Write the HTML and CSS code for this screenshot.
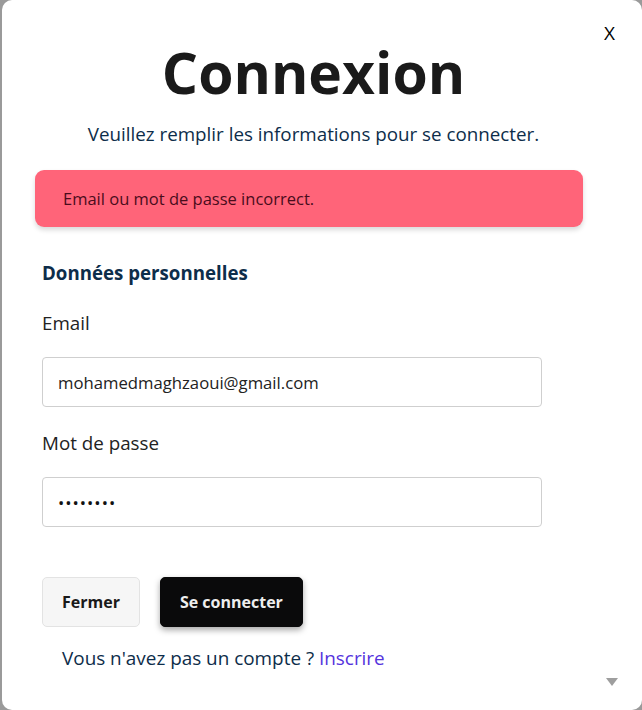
FILE: index.html
```html
<!DOCTYPE html>
<html lang="fr">
<head>
<meta charset="utf-8">
<title>Connexion</title>
<link rel="stylesheet" href="styles.css">
</head>
<body>
<div class="modal">
  <button class="close" type="button">X</button>
  <div class="content">
    <h1 class="title">Connexion</h1>
    <p class="subtitle">Veuillez remplir les informations pour se connecter.</p>
    <div class="alert">Email ou mot de passe incorrect.</div>
    <form class="form">
      <h2 class="section">Données personnelles</h2>
      <label class="label">Email</label>
      <div class="input">mohamedmaghzaoui@gmail.com</div>
      <label class="label">Mot de passe</label>
      <div class="input pass">••••••••</div>
      <div class="actions">
        <button type="button" class="btn btn-light">Fermer</button>
        <button type="button" class="btn btn-dark">Se connecter</button>
      </div>
      <p class="footer">Vous n'avez pas un compte ? <a href="#" class="link">Inscrire</a></p>
    </form>
  </div>
  <span class="scroll-arrow"></span>
</div>
</body>
</html>
```
FILE: styles.css
```css
* { box-sizing: border-box; }
html, body { margin: 0; height: 100%; }
body {
  background: #9a9a9a;
  font-family: "Open Sans", "Noto Sans", sans-serif;
  overflow: hidden;
}
.modal {
  position: relative;
  margin-left: 2px;
  height: 710px;
  background: #fff;
  border-radius: 10px;
  overflow: hidden;
}
.close {
  position: absolute;
  top: 20px;
  right: 27px;
  background: none;
  border: none;
  font-family: "Open Sans", sans-serif;
  font-size: 19px;
  color: #000;
  padding: 0;
}
.content {
  width: 623px;
  padding: 34px 0 0 33px;
}
.title {
  margin: 0;
  text-align: center;
  font-size: 57px;
  line-height: 76px;
  font-weight: 700;
  color: #1a1a1a;
  padding-right: 33px;
}
.subtitle {
  margin: 12px 0 0;
  text-align: center;
  font-size: 18.8px;
  line-height: 24px;
  color: #0d2d4a;
  padding-right: 33px;
}
.alert {
  width: 548px;
  margin-top: 24px;
  height: 57px;
  background: #ff6479;
  border-radius: 9px;
  box-shadow: 0 3px 5px rgba(0,0,0,0.15);
  color: #4a0c1c;
  font-size: 16.5px;
  padding: 18px 28px;
  line-height: 22px;
}
.form {
  padding-left: 7px;
  display: flex;
  flex-direction: column;
  align-items: flex-start;
}
.section {
  margin: 34px 0 0;
  font-size: 18.7px;
  line-height: 24px;
  font-weight: 700;
  color: #0d2d4a;
}
.label {
  margin-top: 26px;
  font-size: 18.8px;
  line-height: 24px;
  color: #222;
}
.input {
  margin-top: 22px;
  width: 500px;
  height: 50px;
  border: 1px solid #cfcfcf;
  border-radius: 4px;
  padding: 0 15px;
  display: flex;
  align-items: center;
  font-size: 16.7px;
  color: #222;
}
.input + .label { margin-top: 24px; }
.pass { font-size: 16.7px; letter-spacing: 1px; color: #111; }
.actions {
  margin-top: 50px;
  display: flex;
  gap: 20px;
}
.btn {
  height: 50px;
  border-radius: 5px;
  font-family: "Open Sans", sans-serif;
  font-weight: 700;
  font-size: 16px;
  padding: 0 19px;
}
.btn-light {
  background: #f6f6f6;
  border: 1px solid #e3e3e3;
  color: #1a1a1a;
}
.btn-dark {
  background: #0a0a0b;
  border: 1px solid #0a0a0b;
  color: #eee;
  box-shadow: 0 3px 6px rgba(0,0,0,0.35);
}
.footer {
  margin: 19px 0 0 20px;
  font-size: 18.9px;
  line-height: 24px;
  color: #0d2d4a;
}
.link { color: #5533dd; text-decoration: none; }
.scroll-arrow {
  position: absolute;
  right: 24px;
  bottom: 24px;
  width: 0;
  height: 0;
  border-left: 6px solid transparent;
  border-right: 6px solid transparent;
  border-top: 8px solid #9e9e9e;
}
```
